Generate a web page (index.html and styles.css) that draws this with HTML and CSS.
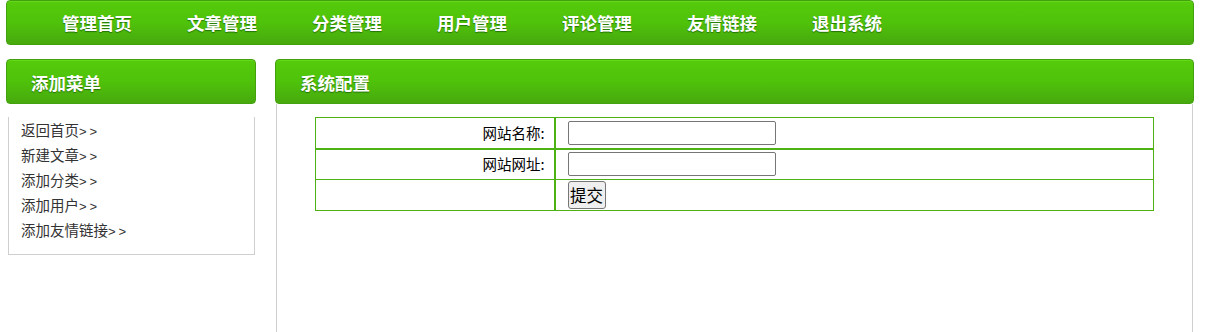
FILE: index.html
```html
<!DOCTYPE html>
<html lang="zh-CN">
<head>
<meta charset="utf-8">
<title>系统配置</title>
<link rel="stylesheet" href="styles.css">
</head>
<body>
<div class="topbar">
  <ul class="nav">
    <li>管理首页</li>
    <li>文章管理</li>
    <li>分类管理</li>
    <li>用户管理</li>
    <li>评论管理</li>
    <li>友情链接</li>
    <li>退出系统</li>
  </ul>
</div>
<div class="main">
  <div class="side">
    <div class="head">添加菜单</div>
    <ul class="menu">
      <li>返回首页<span class="arr">&gt;&gt;</span></li>
      <li>新建文章<span class="arr">&gt;&gt;</span></li>
      <li>添加分类<span class="arr">&gt;&gt;</span></li>
      <li>添加用户<span class="arr">&gt;&gt;</span></li>
      <li>添加友情链接<span class="arr">&gt;&gt;</span></li>
    </ul>
  </div>
  <div class="content">
    <div class="head">系统配置</div>
    <div class="box">
      <table class="form">
        <tr class="r1">
          <td class="lbl">网站名称:</td>
          <td class="val"><input type="text" class="inp"></td>
        </tr>
        <tr>
          <td class="lbl">网站网址:</td>
          <td class="val"><input type="text" class="inp"></td>
        </tr>
        <tr>
          <td class="lbl"></td>
          <td class="val"><button class="btn">提交</button></td>
        </tr>
      </table>
    </div>
  </div>
</div>
</body>
</html>
```

FILE: styles.css
```css
html, body {
  margin: 0;
  padding: 0;
  background: #fff;
  font-family: "Noto Sans CJK SC", "Liberation Sans", sans-serif;
  height: 100%;
}
body {
  padding: 0 11px 0 6px;
  box-sizing: border-box;
  overflow: hidden;
}
.topbar, .head {
  background: linear-gradient(to bottom, #55cb0b 0%, #4fc20a 50%, #47a90e 100%);
  border: 1px solid #42a10c;
  border-radius: 4px;
  box-shadow: inset 0 1px 0 #63d81c;
  color: #fff;
  font-weight: bold;
  font-size: 17.5px;
  text-shadow: 0 1px 1px rgba(0,60,0,0.55);
  box-sizing: border-box;
}
.topbar {
  height: 45px;
}
.nav {
  list-style: none;
  margin: 0;
  padding: 0 0 0 55px;
  display: flex;
  gap: 55px;
  line-height: 43px;
}
.nav li {
  width: 70px;
  white-space: nowrap;
}
.main {
  display: flex;
  gap: 19px;
  margin-top: 14px;
  height: calc(100% - 59px);
}
.side {
  width: 250px;
  flex: none;
}
.content {
  flex: 1;
  display: flex;
  flex-direction: column;
}
.head {
  height: 45px;
  line-height: 46px;
  padding-left: 24px;
}
.menu {
  list-style: none;
  margin: 13px 1px 0 2px;
  padding: 0 0 12px 12px;
  border: 1px solid #cfcfcf;
  border-top: none;
  font-size: 14.5px;
  line-height: 25px;
  color: #333;
}
.menu li {
  height: 25px;
  white-space: nowrap;
}
.arr {
  display: inline-block;
  line-height: 1;
  letter-spacing: 3px;
  font-family: "Liberation Sans", sans-serif;
  font-size: 13px;
}
.box {
  flex: 1;
  margin: 0 1px;
  border-left: 1px solid #cfcfcf;
  border-right: 1px solid #cfcfcf;
  padding-top: 13px;
}
.form {
  border-collapse: collapse;
  width: calc(100% - 76px);
  margin: 0 auto;
  font-size: 14.5px;
  color: #000;
}
.form td {
  border: 1px solid #4db214;
  height: 31px;
  padding: 0;
  box-sizing: border-box;
  line-height: 20px;
}
.form .r1 td {
  border-bottom-width: 2px;
}
.lbl {
  width: 239px;
  text-align: right;
  padding-right: 9px !important;
  border-right-width: 2px !important;
}
.val {
  padding-left: 12px !important;
}
.inp {
  width: 208px;
  height: 24px;
  box-sizing: border-box;
  border: 1px solid #767676;
  border-radius: 2px;
  margin: 0;
  vertical-align: middle;
}
.btn {
  font-family: "Noto Sans CJK SC", sans-serif;
  font-size: 16.5px;
  height: 28px;
  width: 38px;
  padding: 0;
  border: 1px solid #767676;
  border-radius: 3px;
  background: #efefef;
  color: #000;
  vertical-align: middle;
  line-height: 26px;
}
```
